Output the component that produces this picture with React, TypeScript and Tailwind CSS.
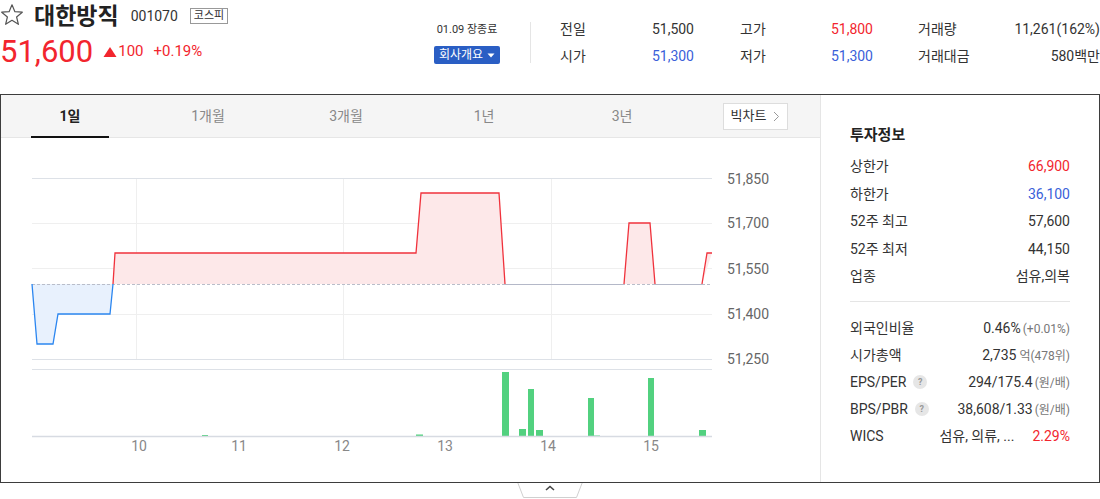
import React from "react"

const font = { fontFamily: 'Roboto, "Noto Sans CJK KR", sans-serif' }

const quotes = [
  [
    { label: "전일", value: "51,500", color: "text-[#333]" },
    { label: "시가", value: "51,300", color: "text-[#3a5fd9]" },
  ],
  [
    { label: "고가", value: "51,800", color: "text-[#f2252e]" },
    { label: "저가", value: "51,300", color: "text-[#3a5fd9]" },
  ],
  [
    { label: "거래량", value: "11,261(162%)", color: "text-[#333]" },
    { label: "거래대금", value: "580백만", color: "text-[#333]" },
  ],
]

const tabs = ["1일", "1개월", "3개월", "1년", "3년"]

const info = [
  { label: "상한가", value: "66,900", color: "text-[#f2252e]" },
  { label: "하한가", value: "36,100", color: "text-[#3a5fd9]" },
  { label: "52주 최고", value: "57,600", color: "text-[#333]" },
  { label: "52주 최저", value: "44,150", color: "text-[#333]" },
  { label: "업종", value: "섬유,의복", color: "text-[#333]" },
]

// price line, page coordinates
const bluePath = "M32,284 L37,344 L53,344 L58,314 L110,314 L113,284"
const redSegs = [
  "M113,284 L115,253 L416,253 L421,193 L499,193 L505,284",
  "M624,284 L629,223 L650,223 L655,284",
  "M702,284 L707,253 L712,253",
]

const bars = [
  { x: 202, w: 6, top: 435 },
  { x: 416, w: 7, top: 434.5 },
  { x: 502, w: 7, top: 372 },
  { x: 519, w: 7, top: 429 },
  { x: 528, w: 6, top: 389 },
  { x: 536, w: 7, top: 430 },
  { x: 588, w: 6, top: 398 },
  { x: 594, w: 6, top: 435.5 },
  { x: 648, w: 6, top: 378 },
  { x: 699, w: 7, top: 430 },
]

const yLabels = [
  { t: "51,850", y: 180.5 },
  { t: "51,700", y: 224.5 },
  { t: "51,550", y: 270.5 },
  { t: "51,400", y: 315.5 },
  { t: "51,250", y: 360.5 },
]

const xLabels = [
  { t: "10", x: 139 },
  { t: "11", x: 239 },
  { t: "12", x: 342 },
  { t: "13", x: 445 },
  { t: "14", x: 548 },
  { t: "15", x: 651 },
]

function Help() {
  return (
    <span className="ml-[7px] inline-flex h-[14px] w-[14px] items-center justify-center rounded-full bg-[#e6e6e6] text-[9px] font-bold leading-none text-[#999]">
      ?
    </span>
  )
}

function Chart() {
  return (
    <svg width="819" height="344" viewBox="1 138 819 344" className="block">
      {/* grid */}
      {[223.5, 268.5, 314.5].map((y) => (
        <line key={y} x1="32" x2="712" y1={y} y2={y} stroke="#efefef" />
      ))}
      {[136.5, 343.5, 551.5].map((x) => (
        <line key={x} x1={x} x2={x} y1="178" y2="359" stroke="#efefef" />
      ))}
      <line x1="32" x2="712" y1="178.5" y2="178.5" stroke="#dde1e7" />
      <line x1="32" x2="712" y1="359.5" y2="359.5" stroke="#dde1e7" />

      {/* fills */}
      <path d={bluePath + " Z"} fill="#e8f1fd" />
      {redSegs.map((d) => (
        <path key={d} d={d + " Z"} fill="#fde8e9" />
      ))}
      <line x1="32" x2="712" y1="284.5" y2="284.5" stroke="#b9bdc9" strokeDasharray="3 2" />
      <line x1="505" x2="624" y1="284.5" y2="284.5" stroke="#b4b8c8" />
      <line x1="655" x2="702" y1="284.5" y2="284.5" stroke="#b4b8c8" />

      {/* lines */}
      <path d={bluePath} fill="none" stroke="#2b86f0" strokeWidth="1.3" />
      {redSegs.map((d) => (
        <path key={d} d={d} fill="none" stroke="#f0323c" strokeWidth="1.3" />
      ))}

      {/* volume */}
      <line x1="32" x2="712" y1="369.5" y2="369.5" stroke="#dde1e7" />
      {bars.map((b) => (
        <rect key={b.x} x={b.x} y={b.top} width={b.w} height={436 - b.top} fill="#52d17f" />
      ))}
      <line x1="32" x2="712" y1="436.5" y2="436.5" stroke="#d7dbe2" strokeWidth="1.5" />

      {yLabels.map((l) => (
        <text key={l.t} x="727" y={l.y} dominantBaseline="middle" fontSize="14" fill="#666" style={font}>
          {l.t}
        </text>
      ))}
      {xLabels.map((l) => (
        <text key={l.t} x={l.x} y={447} dominantBaseline="middle" textAnchor="middle" fontSize="14" fill="#888" style={font}>
          {l.t}
        </text>
      ))}
    </svg>
  )
}

export default function App() {
  return (
    <div className="h-[499px] w-[1100px] overflow-hidden bg-white text-[#333]" style={font}>
      {/* header */}
      <div className="flex h-[94px] items-start">
        <div className="w-[434px]">
          <div className="flex h-[32px] items-center">
            <svg width="24" height="24" viewBox="0 0 24 24" className="mt-[-2px]">
              <polygon
                points="12,1.8 14.9,8.7 22.3,9.2 16.6,14 18.4,21.3 12,17.3 5.6,21.3 7.4,14 1.7,9.2 9.1,8.7"
                fill="none"
                stroke="#555"
                strokeWidth="1.2"
                strokeLinejoin="round"
              />
            </svg>
            <span className="ml-[10px] text-[23px] font-bold leading-none text-[#222]">대한방직</span>
            <span className="ml-[12px] text-[14px] leading-none text-[#333]">001070</span>
            <span className="ml-[12px] border border-[#999] px-[3px] text-[11px] leading-[14px] text-[#333]">코스피</span>
          </div>
          <div className="flex h-[39px] items-center">
            <span className="text-[31px] leading-none text-[#f2252e]">51,600</span>
            <span className="ml-[10px] flex items-center text-[15px] leading-none text-[#f2252e]">
              <svg width="14" height="12" viewBox="0 0 14 12" className="mr-[1px]">
                <polygon points="7,1 13.5,11 0.5,11" fill="#f2252e" />
              </svg>
              100
            </span>
            <span className="ml-[10px] text-[15px] leading-none text-[#f2252e]">+0.19%</span>
          </div>
        </div>

        <div className="flex pt-[16px]">
          <div className="flex w-[66px] flex-col items-center">
            <div className="h-[27px] text-[11px] leading-[27px] text-[#333]">01.09 장종료</div>
            <div className="mt-[3px] flex h-[18px] w-[66px] items-center justify-center rounded-[2px] bg-[#2a5ec4] text-[12px] text-white">
              회사개요
              <svg width="8" height="5" viewBox="0 0 8 5" className="ml-[4px]">
                <polygon points="0.5,0.5 7.5,0.5 4,4.5" fill="#fff" />
              </svg>
            </div>
          </div>
          <div className="ml-[30px] mt-[6px] h-[41px] w-px bg-[#e5e5e5]" />
          {quotes.map((col, i) => (
            <div
              key={i}
              className={
                i === 0 ? "ml-[29px] w-[134px]" : i === 1 ? "ml-[46px] w-[133px]" : "ml-[45px] w-[182px]"
              }
            >
              {col.map((q) => (
                <div key={q.label} className="flex h-[27px] items-center justify-between text-[14px]">
                  <span className="text-[#333]">{q.label}</span>
                  <span className={q.color}>{q.value}</span>
                </div>
              ))}
            </div>
          ))}
        </div>
      </div>

      {/* main box */}
      <div className="flex h-[389px] border border-[#3d3d3d]">
        <div className="w-[819px]">
          <div className="flex h-[43px] items-center border-b border-[#e6e6e6] bg-[#f5f5f5]">
            {tabs.map((t, i) => (
              <div
                key={t}
                className={
                  "relative flex h-full w-[138px] items-center justify-center text-[14px] " +
                  (i === 0 ? "font-bold text-[#222]" : "text-[#888]")
                }
              >
                {t}
                {i === 0 && <span className="absolute bottom-[-1px] left-[30px] h-[2px] w-[78px] bg-[#111]" />}
              </div>
            ))}
            <div className="ml-[32px] flex h-[27px] w-[65px] items-center justify-center border border-[#ddd] bg-white text-[13px] text-[#333]">
              빅차트
              <svg width="7" height="11" viewBox="0 0 7 11" className="ml-[7px]">
                <polyline points="1,1 5.5,5.5 1,10" fill="none" stroke="#999" strokeWidth="1" />
              </svg>
            </div>
          </div>
          <Chart />
        </div>

        <div className="flex-1 border-l border-[#e5e5e5] px-[29px] pt-[27px]">
          <div className="h-[26px] text-[15px] font-bold leading-[26px] text-[#222]">투자정보</div>
          <div className="mt-[5px]">
            {info.map((r) => (
              <div key={r.label} className="flex h-[27.5px] items-center justify-between text-[14px]">
                <span className="text-[#333]">{r.label}</span>
                <span className={r.color}>{r.value}</span>
              </div>
            ))}
          </div>
          <div className="mt-[10px] h-px bg-[#e5e5e5]" />
          <div className="mt-[13px] text-[14px]">
            <div className="flex h-[27px] items-center justify-between">
              <span>외국인비율</span>
              <span>
                0.46%<span className="ml-[2px] text-[12px] text-[#777]">(+0.01%)</span>
              </span>
            </div>
            <div className="flex h-[27px] items-center justify-between">
              <span>시가총액</span>
              <span>
                2,735<span className="ml-[3px] text-[12px] text-[#777]">억(478위)</span>
              </span>
            </div>
            <div className="flex h-[27px] items-center justify-between">
              <span className="flex items-center">
                EPS/PER
                <Help />
              </span>
              <span>
                294/175.4<span className="ml-[2px] text-[12px] text-[#777]">(원/배)</span>
              </span>
            </div>
            <div className="flex h-[27px] items-center justify-between">
              <span className="flex items-center">
                BPS/PBR
                <Help />
              </span>
              <span>
                38,608/1.33<span className="ml-[2px] text-[12px] text-[#777]">(원/배)</span>
              </span>
            </div>
            <div className="flex h-[27px] items-center justify-between">
              <span>WICS</span>
              <span>
                섬유, 의류, ...<span className="ml-[18px] text-[#f2252e]">2.29%</span>
              </span>
            </div>
          </div>
        </div>
      </div>

      {/* collapse tab */}
      <div className="flex justify-center">
        <svg width="66" height="16" viewBox="0 0 66 16" className="mt-[-1px]">
          <polygon points="0.5,0 65.5,0 59.5,15.5 6.5,15.5" fill="#fff" stroke="#d0d0d0" />
          <line x1="0" x2="66" y1="0.5" y2="0.5" stroke="#3d3d3d" />
          <polyline points="29,8 33,4.5 37,8" fill="none" stroke="#444" strokeWidth="1.6" />
        </svg>
      </div>
    </div>
  )
}
